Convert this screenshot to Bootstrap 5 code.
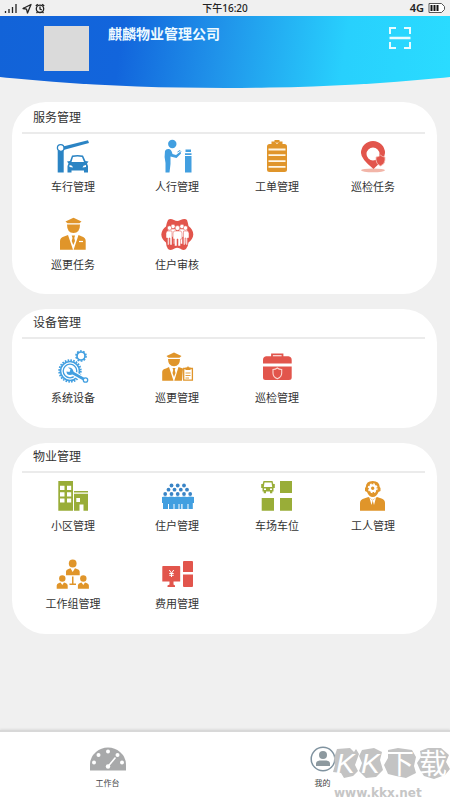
<!DOCTYPE html>
<html lang="zh-CN">
<head>
<meta charset="utf-8">
<meta name="viewport" content="width=device-width, initial-scale=1">
<title>麒麟物业管理公司</title>
<link href="https://cdn.jsdelivr.net/npm/bootstrap@5.3.0/dist/css/bootstrap.min.css" rel="stylesheet">
<style>
  body { background: #f0f0f0; color: #333; font-family: "Liberation Sans", "Noto Sans CJK SC", sans-serif; }
  svg { display: block; }
  .status { height: 16px; padding: 0 4px; font-family: "Noto Sans", "Noto Sans CJK SC", sans-serif; font-size: 10px; line-height: 16px; font-weight: 500; color: #222; }
  .status > * { flex: 1 1 0; }
  .network { font-size: 11px; font-weight: 600; }
  .hero { height: 72px; padding: 10px 38px 0 44px;
    background: linear-gradient(98deg, #1263d8 0%, #1265dc 27%, #2094ea 49%, #28d0fd 76%, #2adcff 100%);
    clip-path: ellipse(100% 82px at 50% -10px); }
  .avatar { width: 45px; height: 45px; background: #dadada; }
  .company { margin: 0 0 0 19px; font-size: 14px; line-height: 16px; font-weight: 700; color: #eefaff; }
  main { padding: 14px 13px 16px 12px; gap: 15px; }
  .panel { background: #fff; border-radius: 34px; padding-bottom: 22px; }
  .panel h2 { margin: 0 12px 0 10px; padding: 6px 11px; font-size: 12px; line-height: 16px; font-weight: 400; border-bottom: 2px solid #ebebeb; }
  .panel-first { padding-bottom: 21px; }
  .panel-first h2 { padding: 8px 11px 6px; }
  .tiles { display: grid; grid-template-columns: 104fr 104fr 96fr 96fr; row-gap: 22px; padding: 5px 16px 0 9px; }
  .tiles-low { padding-top: 11px; }
  .tile { gap: 6px; font-size: 11px; line-height: 16px; color: #333; white-space: nowrap; }
  .tile svg { width: 34px; height: 34px; }
  .blue-deep { color: #2b84c4; } .blue { color: #429fe0; } .orange { color: #e0952a; } .red { color: #e2554c; } .green { color: #99ad38; }
  .tabs { height: 70px; padding: 14px 20px 0 0; background: #fff; border-top: 2px solid #d8d8d8; box-shadow: 0 -1px 2px #ddd; }
  .tabs a { gap: 6px; font-size: 8px; line-height: 12px; color: #444; }
  .watermark { right: 0; bottom: 0; width: 118px; height: 54px; pointer-events: none; }
</style>
<script src="https://cdn.jsdelivr.net/npm/bootstrap@5.3.0/dist/js/bootstrap.bundle.min.js"></script>
</head>
<body class="d-flex flex-column min-vh-100">

<div class="status d-flex align-items-center">
  <div class="d-flex">
    <svg width="42" height="14" viewBox="0 0 42 14" fill="none" stroke="#222" stroke-width="1.3">
      <path d="M1.500 12V10M5 12V8M8.500 12V6M12 12V3"/>
      <path d="M19 7.500L27 3.500L23.500 12L22.500 8.200Z" stroke-linejoin="round"/>
      <circle cx="36" cy="7.800" r="3.700"/><path d="M36 5.500V8L37.800 9M31.800 5L33.800 3.200M38.200 3.200L40.200 5M33.500 11L32.500 12M38.500 11L39.500 12"/>
    </svg>
  </div>
  <div class="text-center">下午16:20</div>
  <div class="d-flex justify-content-end align-items-center gap-1">
    <span class="network">4G</span>
    <svg width="18" height="12" viewBox="0 0 18 12"><path d="M1 1.500H13.500L16.500 4.500V7.500L13.500 10.500H1Z" fill="#fff" stroke="#555"/><path d="M3.500 3V9M6.500 3V9M9.500 3V9" stroke="#111" stroke-width="2"/></svg>
  </div>
</div>

<header class="hero d-flex align-items-start">
  <div class="avatar"></div>
  <h1 class="company">麒麟物业管理公司</h1>
  <button type="button" class="btn p-0 border-0 ms-auto" aria-label="扫一扫">
    <svg width="24" height="24" viewBox="0 0 24 24" fill="none" stroke="#e6fbff" stroke-width="2"><path d="M2 8V2H8M16 2H22V8M22 16V22H16M8 22H2V16"/><path d="M1.500 12H22.500" stroke-width="2.600"/></svg>
  </button>
</header>

<main class="d-flex flex-column">
  <section class="panel panel-first">
    <h2>服务管理</h2>
    <nav class="tiles" aria-label="服务管理">
      <a href="#" class="tile d-flex flex-column align-items-center text-decoration-none">
        <svg class="blue-deep" viewBox="0 0 34 34" fill="currentColor"><path d="M1.700 11.500H7.700V33.500H1.700Z"/><path d="M7 7.500L32 1.200L33 4L7.500 11Z"/><circle cx="4.700" cy="9" r="3.300" fill="#fff" stroke="currentColor" stroke-width="1.300"/><path fill-rule="evenodd" d="M16 16.500Q21.500 15.500 27 16.500L29.500 22L32.500 22.500L31 24.500L32 27V33.500H28V31.500H15.500V33.500H11.500V27L12.500 24.500L11 22.500L14 22ZM17 18L15.500 23H28L26 18Q21.500 17.200 17 18ZM13.500 26V28L17 28.500L16 26.800ZM30 26L27.500 26.800L26.500 28.500L30 28Z"/></svg>
        车行管理</a>
      <a href="#" class="tile d-flex flex-column align-items-center text-decoration-none">
        <svg class="blue" viewBox="0 0 34 34" fill="currentColor"><circle cx="12.300" cy="5" r="4.200"/><path d="M5 12Q6 9.500 9 10Q11.500 10.500 12.500 15L16 16L20.500 12.500L21 14.500L16.500 19L10.500 17.500V25L9.500 33.500H5.500V24Q4 17 5 12Z"/><path d="M17.500 13L20 11.500L21 12.500" fill="none" stroke="currentColor"/><path d="M25.500 10.500H31V13H25.500ZM25 14.200H31.500V16H25ZM25 17H31.500V33.500H25Z"/></svg>
        人行管理</a>
      <a href="#" class="tile d-flex flex-column align-items-center text-decoration-none">
        <svg class="orange" viewBox="0 0 34 34" fill="currentColor"><rect x="7" y="5" width="20" height="28" rx="2.500"/><path d="M11.500 2.500H14.500V1H19.500V2.500H22.500V6H11.500Z"/><path d="M16 3.500L17 4.700L18 3.500" stroke="#fff" fill="none"/><path d="M8.500 10.500H25.500M8.500 16.200H25.500M8.500 22.200H25.500M8.500 27.800H25.500" stroke="#fff6e4" stroke-width="1.800"/></svg>
        工单管理</a>
      <a href="#" class="tile d-flex flex-column align-items-center text-decoration-none">
        <svg class="red" viewBox="0 0 34 34" fill="currentColor"><ellipse cx="17" cy="31.300" rx="12" ry="1.900" fill="#f2b5a8"/><path fill-rule="evenodd" d="M17 2A12 12 0 0 1 29 14Q29 20 17.500 30Q5 20 5 14A12 12 0 0 1 17 2ZM17 8.500A6.500 6.500 0 1 0 17 21.500A6.500 6.500 0 1 0 17 8.500Z"/><path d="M20 18Q22.500 18 24.500 16.200Q26.500 18 29 18V21Q29 25 24.500 27Q20 25 20 21Z" stroke="#f8c5bc" stroke-width=".8"/></svg>
        巡检任务</a>
      <a href="#" class="tile d-flex flex-column align-items-center text-decoration-none">
        <svg class="orange" viewBox="0 0 34 34" fill="currentColor"><path d="M9.500 4.500L17.500 .7L25.500 4.500L23.500 6.200H11.500Z"/><path d="M11 7.500H24Q24 16 17.500 16Q11 16 11 7.500Z"/><path d="M4 32.700V24Q4 20.500 8 19.500L12 18L17 32.700ZM29.700 32.700V24Q29.700 20.500 26 19.500L22.500 18L17.600 32.700Z"/><path d="M15.700 18.500H19L18.300 21L19 24L17.300 28L15.700 24L16.500 21Z"/><path d="M23 24.500H27" stroke="#fff" stroke-width="1.200"/></svg>
        巡更任务</a>
      <a href="#" class="tile d-flex flex-column align-items-center text-decoration-none">
        <svg class="red" viewBox="0 0 34 34" fill="currentColor"><path d="M8 3Q10 1 14 3Q17.300 5 20.500 3Q25 1 27 3Q28 6 28.500 9Q33 12 33.300 17.500Q33 22 28.500 25.500Q28 30 26 32Q23 34 20 31.500Q17 30 14.500 31.500Q11 34 8 32Q6 29 6 25.500Q1.500 22 1.300 17.500Q2 12 6 9.500Q6.500 6 8 3Z"/><g fill="#fff" stroke="#e2554c" stroke-width=".5"><circle cx="13" cy="9.500" r="2.200"/><circle cx="22" cy="9.500" r="2.200"/><path d="M9 12H16V27H13.500V20H12V27H9.500V20H7.500V14ZM19 12H26L28 14V21H26V27H23.500V20H22.500V27H19Z"/><circle cx="9.500" cy="11" r="2.200"/><circle cx="17.500" cy="11" r="2.400"/><circle cx="25.500" cy="11" r="2.200"/><path d="M14 14H21L22 16V22H20.500V29H18V22H17V29H14.500V22H13V16Z"/><path d="M7 14H12V28H10V21H9V28H7.500V21H6V16ZM23.500 14H28L29 16V21H27.500V28H26V21H25V28H23.500Z"/></g></svg>
        住户审核</a>
    </nav>
  </section>

  <section class="panel">
    <h2>设备管理</h2>
    <nav class="tiles tiles-low" aria-label="设备管理">
      <a href="#" class="tile d-flex flex-column align-items-center text-decoration-none">
        <svg class="blue" viewBox="0 0 34 34" fill="none" stroke="currentColor"><circle cx="14" cy="21" r="10.800" stroke-width="1.800" stroke-dasharray="1.600 1.230"/><circle cx="14" cy="21" r="9.500" stroke-width="1.700"/><circle cx="14" cy="21" r="6.800" stroke-width="1.300"/><circle cx="25" cy="6" r="4" stroke-width="1.700"/><circle cx="25" cy="6" r="5.100" stroke-width="1.500" stroke-dasharray="1.800 1.400"/><path d="M15 22L29 30" stroke="#fff" stroke-width="5"/><path d="M15 22L28 29.300" stroke-width="2.800"/><path d="M12 17.500L14.500 19.500L13.500 22L10.500 21.500Q10.500 25 14 25Q17.500 25 17.500 21.500Q16.500 17 12 17.500Z" fill="currentColor" stroke="none"/><circle cx="29.500" cy="30" r="2.200" stroke-width="1.300" fill="#fff"/></svg>
        系统设备</a>
      <a href="#" class="tile d-flex flex-column align-items-center text-decoration-none">
        <svg class="orange" viewBox="0 0 34 34" fill="currentColor"><path d="M6.500 6L14 2.500L21.500 6L19.500 7.700H8.500Z"/><path d="M8 9H20Q20 16.300 14 16.300Q8 16.300 8 9Z"/><path d="M2.200 30.700V22Q2.200 19 6 18.500L9 17L13.500 30.700ZM23 18.500L18.500 17L14.300 30.700H22Z"/><path d="M12.500 18H15.500L14.800 20L15.500 23L14 27L12.500 23L13.200 20Z"/><path d="M23.700 18.500H32.400V30.200H23.700Z" fill="#fff" stroke="currentColor" stroke-width="1.300"/><path d="M25.500 17.500H27L28 16L29 17.500H30.500V20H25.500Z"/><path d="M25.500 23H30.500M25.500 25.500H30.500M25.500 28H29" stroke="currentColor" stroke-width=".9"/></svg>
        巡更管理</a>
      <a href="#" class="tile d-flex flex-column align-items-center text-decoration-none">
        <svg class="red" viewBox="0 0 34 34" fill="currentColor"><path d="M12 7V4.400H22.500V7" fill="none" stroke="currentColor" stroke-width="1.800"/><path d="M6 6.300H28.500Q31.700 7 31.700 10V13.500H3V10Q3 7 6 6.300ZM3 16.500H31.700V27.500Q31.700 30 29 30H5.500Q3 30 3 27.500Z"/><path d="M13 19.500Q15.500 19.500 17.300 18Q19 19.500 21.700 19.500V23Q21.700 27 17.300 28.800Q13 27 13 23Z" fill="none" stroke="#fbd8d2" stroke-width="1.100"/></svg>
        巡检管理</a>
    </nav>
  </section>

  <section class="panel">
    <h2>物业管理</h2>
    <nav class="tiles" aria-label="物业管理">
      <a href="#" class="tile d-flex flex-column align-items-center text-decoration-none">
        <svg class="green" viewBox="0 0 34 34" fill="currentColor"><path d="M2.300 3H17V32.700H2.300ZM18 13H32V14.500H18ZM18 15.700H32V32.700H27.500V26.500H23.500V32.700H18Z"/><path fill="#fff" d="M4 7.800H8.500V12H4ZM11 7.800H15.200V12H11ZM4 14.200H8.500V18.500H4ZM11 14.200H15.200V18.500H11ZM4 20.500H8.500V24.500H4ZM11 20.500H15.200V24.500H11ZM20.300 20H24V24H20.300Z"/></svg>
        小区管理</a>
      <a href="#" class="tile d-flex flex-column align-items-center text-decoration-none">
        <svg class="blue" viewBox="0 0 34 34" fill="currentColor"><g fill="#3984c6"><circle cx="11.500" cy="7.500" r="1.900"/><circle cx="17.700" cy="7.500" r="1.900"/><circle cx="24" cy="7.500" r="1.900"/><circle cx="8.500" cy="11.700" r="1.900"/><circle cx="14.500" cy="11.700" r="1.900"/><circle cx="20.800" cy="11.700" r="1.900"/><circle cx="27" cy="11.700" r="1.900"/><circle cx="5.200" cy="16" r="1.900"/><circle cx="11.500" cy="16" r="1.900"/><circle cx="17.700" cy="16" r="1.900"/><circle cx="24" cy="16" r="1.900"/><circle cx="30.200" cy="16" r="1.900"/></g><path d="M2 19L5 18.500L8 19L11.500 18.500L14.500 19L17.700 18.500L21 19L24 18.500L27 19L30.200 18.500L34 19V25H32.800V31H28.500V26H27.500V31H22.500V26H21.300V31H19.500V26H18.500V31H14.500V26H13.500V31H9V26H8V31H3V25H2Z"/></svg>
        住户管理</a>
      <a href="#" class="tile d-flex flex-column align-items-center text-decoration-none">
        <svg class="green" viewBox="0 0 34 34" fill="currentColor"><path d="M20 3H32V15H20ZM1.700 20H14V32.700H1.700ZM20 20H32V32.700H20Z"/><path fill-rule="evenodd" d="M3.500 3H12.500L13.300 6H14.800V10H13.500V13.500H12.300V15.300H10V13.500H6V15.300H3.700V13.500H2.500V10H1.200V6H2.700ZM4.500 4.500L3.800 9H12.200L11.500 4.500ZM4 10.500V12H6V10.500ZM10 10.500V12H12V10.500Z"/></svg>
        车场车位</a>
      <a href="#" class="tile d-flex flex-column align-items-center text-decoration-none">
        <svg class="orange" viewBox="0 0 34 34" fill="currentColor"><path d="M9.800 9Q10 3 16.700 3Q23.500 3 23.700 9L24.500 10V13L22.500 14Q20.500 19 16.700 19Q13 19 11 14L9 13V10Z"/><circle cx="16.700" cy="10.200" r="2.800" fill="none" stroke="#fff" stroke-width="2.200"/><circle cx="16.700" cy="10.200" r="4.300" fill="none" stroke="#fff" stroke-width="1.300" stroke-dasharray="1.800 1.580"/><path d="M4 32.700V25Q4 21.500 8 20.500L12.500 19L16.700 22L21 19L25.500 20.500Q29 21.500 29 25V32.700Z"/><path d="M13.500 19.800L15.500 27L16.700 22.500L18 27L20 19.800L16.700 22.500Z" fill="#fff"/></svg>
        工人管理</a>
      <a href="#" class="tile d-flex flex-column align-items-center text-decoration-none">
        <svg class="orange" viewBox="0 0 34 34" fill="currentColor"><circle cx="16.700" cy="7.500" r="3.900"/><path d="M10 19.300V15.500Q10 13.500 12.500 13L14.500 12.200L16.700 16L19 12.200L21 13Q23.700 13.500 23.700 15.500V19.300Z"/><path d="M16 20.500H17.500V27.500H20V29H13.500V27.500H16Z"/><circle cx="6.300" cy="22.500" r="3.200"/><circle cx="27.300" cy="22.500" r="3.200"/><path d="M.7 32.700V29.500Q.7 27.500 3 27L4.500 26.400L6.300 29L8 26.400L9.500 27Q11.700 27.500 11.700 29.500V32.700ZM21.900 32.700V29.500Q21.900 27.500 24 27L25.500 26.400L27.300 29L29 26.400L30.500 27Q32.900 27.500 32.900 29.500V32.700Z"/></svg>
        工作组管理</a>
      <a href="#" class="tile d-flex flex-column align-items-center text-decoration-none">
        <svg class="red" viewBox="0 0 34 34" fill="currentColor"><path d="M3 10H19.500Q20.200 10 20.200 10.800V25.500H13.500V28.500L15 29.500V31H7.500V29.500L9.500 28.500V25.500H2.300V10.800Q2.300 10 3 10ZM24 5H32Q33 5 33 6V16H23V6Q23 5 24 5ZM23 18.500H33V30Q33 31 32 31H24Q23 31 23 30Z"/><path d="M9.300 14L11.500 17.200L13.700 14M11.500 17V21M9.300 17.500H13.700M9.300 19.300H13.700" fill="none" stroke="#fff" stroke-width="1"/></svg>
        费用管理</a>
    </nav>
  </section>
</main>

<footer class="tabs position-relative mt-auto">
  <nav class="row g-0" aria-label="主导航">
    <a href="#" class="col d-flex flex-column align-items-center text-decoration-none">
      <svg width="38" height="26" viewBox="0 0 38 26"><path d="M1 24.500V19Q1 11 7 6Q12 1.500 19 1.500Q26 1.500 31 6Q37 11 37 19V24.500Z" fill="#a8a9aa"/><g fill="#fff"><circle cx="5" cy="16.500" r="2"/><circle cx="9.500" cy="9" r="2"/><circle cx="19" cy="5.500" r="2"/><circle cx="28.500" cy="9" r="2"/><circle cx="33" cy="16.500" r="2"/><circle cx="19" cy="20.500" r="2.200"/></g><path d="M19 20.500L26.500 11.500" stroke="#fff" stroke-width="1.600"/></svg>
      工作台</a>
    <a href="#" class="col d-flex flex-column align-items-center text-decoration-none">
      <svg width="26" height="26" viewBox="0 0 26 26"><circle cx="13" cy="13" r="11.800" fill="#fff" stroke="#7f929f" stroke-width="1.500"/><circle cx="13" cy="9" r="4" fill="#8d999f"/><path d="M6 20V17.500Q6 15 9.500 14.500H16.500Q20 15 20 17.500V20Z" fill="#8d999f"/></svg>
      我的</a>
  </nav>
  <div class="watermark position-absolute">
    <svg class="w-100 h-100" viewBox="0 0 118 54">
      <g fill="#c3c3c3"><path d="M5 3L18 2L22 6L24 3L27 8L23 19L26 25L21 30L12 32L9 27L1 26L3 19L2 12Z"/><path d="M30 4L42 2L50 6L48 14L51 24L44 31L34 32L27 25L30 17L27 10Z"/><path d="M56 4L66 2L80 4L84 11L82 20L84 27L74 32L64 30L56 28L52 19L56 12Z"/><path d="M88 5L96 2L109 2L117 9L114 16L118 23L113 29L102 33L92 30L88 24L85 17L89 11Z"/></g>
      <g fill="#fff" font-family="'Liberation Sans', 'Noto Sans CJK SC', sans-serif" font-size="28"><text x="4" y="27" font-style="italic">K</text><text x="29" y="27" font-style="italic">K</text><text x="54" y="28">下</text><text x="87" y="28">载</text></g>
      <text x="2" y="51" font-size="12" font-weight="700" font-family="'DejaVu Sans', sans-serif" fill="#c6c6c6">www.kkx.net</text>
    </svg>
  </div>
</footer>
</body>
</html>
